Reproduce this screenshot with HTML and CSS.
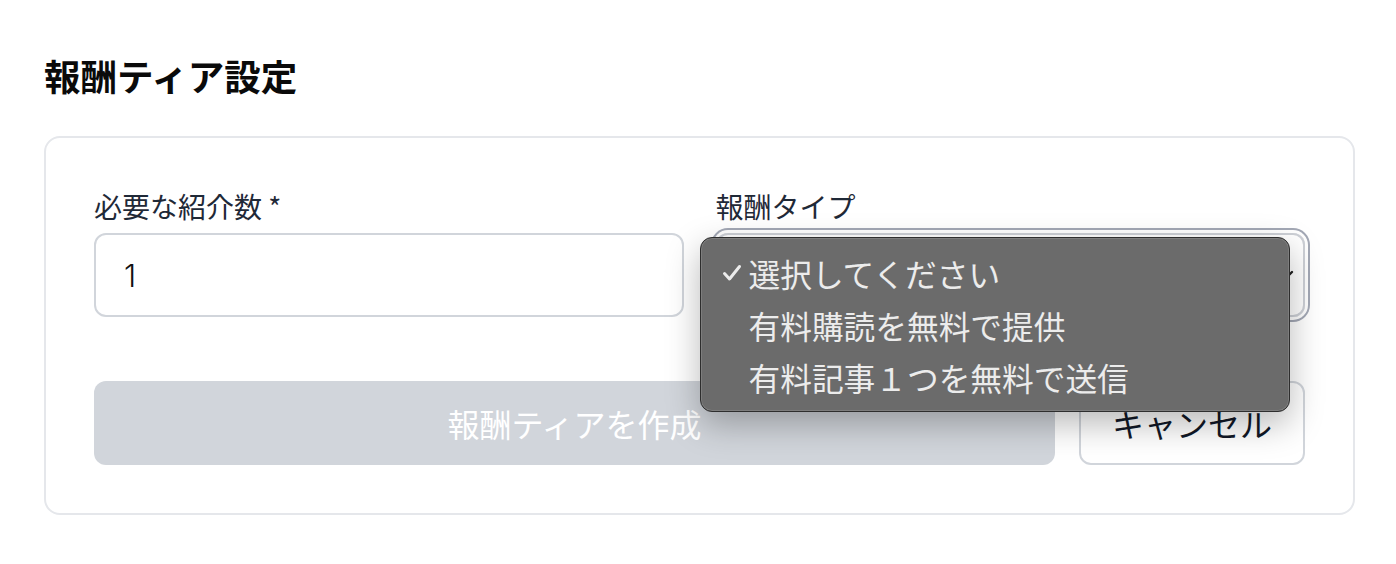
FILE: index.html
```html
<!DOCTYPE html>
<html lang="ja">
<head>
<meta charset="utf-8">
<link rel="stylesheet" href="styles.css">
</head>
<body>
<div class="page">
  <h2 class="title">報酬ティア設定</h2>
  <div class="card">
    <div class="fields">
      <div class="field">
        <label class="label">必要な紹介数 *</label>
        <div class="input">1</div>
      </div>
      <div class="field">
        <label class="label">報酬タイプ</label>
        <div class="select-wrap">
          <div class="select">
            <span></span>
            <svg class="chev" width="22" height="22" viewBox="0 0 22 22"><path d="M5 8 L11 14 L17 8" fill="none" stroke="#222" stroke-width="2.4" stroke-linecap="round" stroke-linejoin="round"/></svg>
          </div>
          <div class="menu">
            <div class="opt"><span class="check"><svg width="20" height="18" viewBox="0 0 20 18"><path d="M2.5 9.5 L7.5 15 L17.5 2.5" fill="none" stroke="#ececec" stroke-width="3" stroke-linecap="round" stroke-linejoin="round"/></svg></span>選択してください</div>
            <div class="opt"><span class="check"></span>有料購読を無料で提供</div>
            <div class="opt"><span class="check"></span>有料記事１つを無料で送信</div>
          </div>
        </div>
      </div>
    </div>
    <div class="actions">
      <button class="btn primary">報酬ティアを作成</button>
      <button class="btn cancel">キャンセル</button>
    </div>
  </div>
</div>
</body>
</html>
```

FILE: styles.css
```css
* { box-sizing: border-box; }
html, body { margin: 0; background: #fff; }
body {
  font-family: "Noto Sans CJK JP", "Inter", sans-serif;
  color: #111827;
}
.page {
  padding: 48px 41px 0 44px;
}
.title {
  margin: 0 0 32px 0;
  font-size: 36.5px;
  line-height: 56px;
  font-weight: 700;
  color: #0a0a0a;
}
.card {
  border: 2px solid #e5e7eb;
  border-radius: 16px;
  padding: 48px 48px 48px 48px;
  height: 379px;
}
.fields {
  display: grid;
  grid-template-columns: 1fr 1fr;
  column-gap: 32px;
}
.field { display: flex; flex-direction: column; }
.label {
  font-size: 28px;
  line-height: 40px;
  margin-bottom: 7px;
  color: #1f2937;
}
.input {
  height: 84px;
  border: 2px solid #d1d5db;
  border-radius: 12px;
  padding: 0 28px;
  display: flex;
  align-items: center;
  font-family: "Inter", "Noto Sans CJK JP", sans-serif;
  font-size: 31px;
  font-weight: 300;
  color: #111;
}
.select-wrap { position: relative; }
.select {
  height: 84px;
  border: 2px solid #cdd0d6;
  border-radius: 12px;
  box-shadow: 0 0 0 3px #fff, 0 0 0 5px #a3a8b5;
  display: flex;
  align-items: center;
  justify-content: space-between;
  padding: 0 6px 0 28px;
}
.chev { margin-top: 0; }
.menu {
  position: absolute;
  left: -16px;
  top: 4px;
  width: 590px;
  height: 175px;
  background: #6b6b6b;
  border: 1px solid #2e2e2e;
  border-radius: 12px;
  box-shadow: inset 0 0 0 1px rgba(255,255,255,0.12), 0 12px 34px rgba(0,0,0,0.28);
  padding: 9px 0;
}
.opt {
  height: 52px;
  display: flex;
  align-items: center;
  font-size: 31.7px;
  color: #ececec;
}
.check {
  width: 48px;
  padding-left: 21px;
  display: flex;
  align-items: center;
}
.actions {
  display: flex;
  gap: 24px;
  margin-top: 64px;
}
.btn {
  height: 84px;
  border-radius: 12px;
  font-family: "Noto Sans CJK JP", sans-serif;
  font-size: 32px;
  padding: 0;
  cursor: pointer;
}
.primary {
  flex: 1;
  background: #d1d5db;
  border: none;
  color: #fff;
}
.cancel {
  width: 226px;
  background: #fff;
  border: 2px solid #d1d5db;
  color: #111827;
}
```
